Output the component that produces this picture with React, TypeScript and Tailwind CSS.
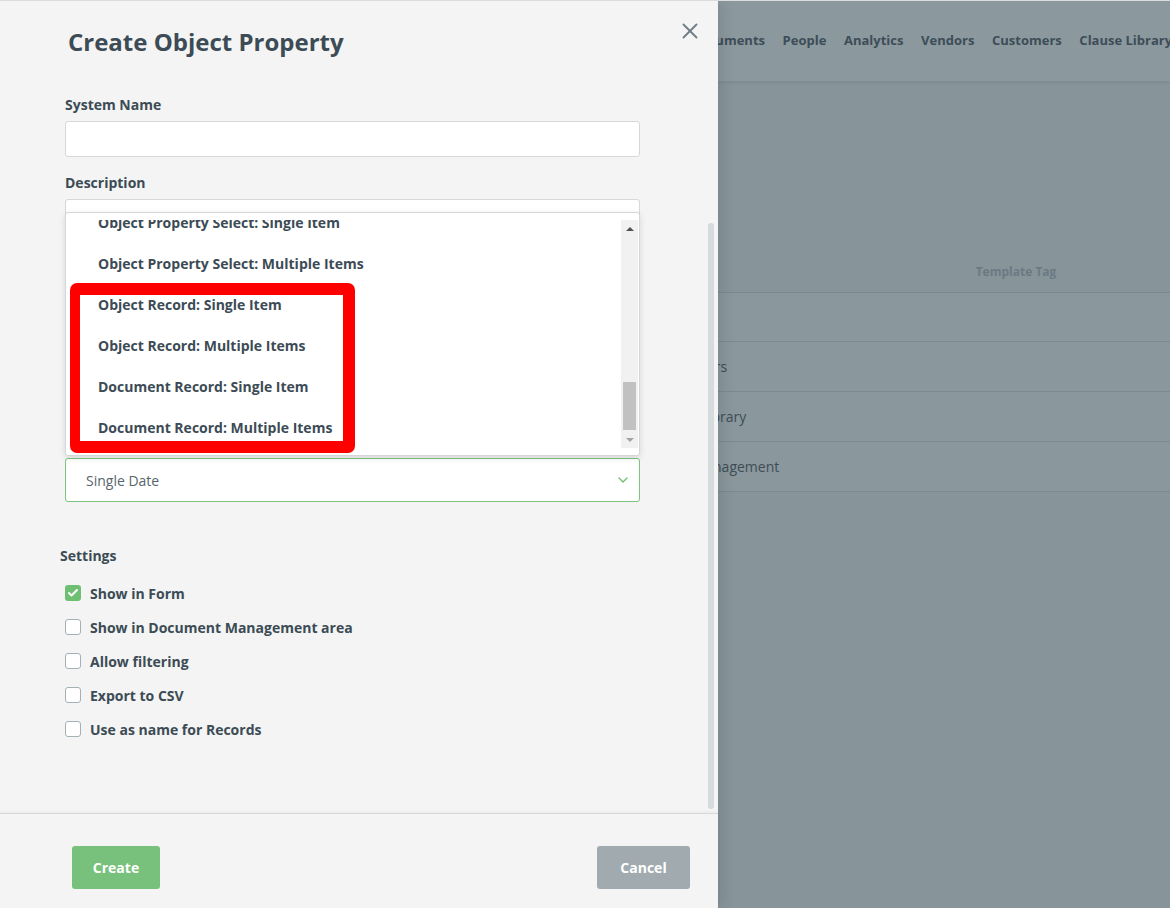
import React from "react";
import { X, ChevronDown, Check } from "lucide-react";

const navItems = ["Documents", "People", "Analytics", "Vendors", "Customers", "Clause Library"];

const tableRows = ["Legal", "Vendors", "Clause Library", "Document Management"];

const typeOptions = [
    "Object Property Select: Single Item",
    "Object Property Select: Multiple Items",
    "Object Record: Single Item",
    "Object Record: Multiple Items",
    "Document Record: Single Item",
    "Document Record: Multiple Items",
];

const settings = [
    { label: "Show in Form", checked: true },
    { label: "Show in Document Management area", checked: false },
    { label: "Allow filtering", checked: false },
    { label: "Export to CSV", checked: false },
    { label: "Use as name for Records", checked: false },
];

// Dimmed app behind the side panel
function Background() {
    return (
        <div className="w-full h-full bg-[#87949a] overflow-hidden">
            {/* Top nav */}
            <div className="h-[80px] bg-[#8b989e] flex items-center pl-[691px] gap-[17.6px] whitespace-nowrap shadow-[0_2px_3px_rgba(0,0,0,0.06)] relative">
                {navItems.map((item) => (
                    <span key={item} className="text-[13px] font-bold text-[#3d4d57]">
                        {item}
                    </span>
                ))}
            </div>

            {/* Table header */}
            <div className="h-[170px]" />
            <div className="h-[42px] flex items-center border-b border-[#7b888e]">
                <div className="w-[900px]" />
                <div className="w-[232px] text-center text-[12px] font-bold text-[#6b7a82]">Template Tag</div>
            </div>

            {/* Rows */}
            {tableRows.map((row, i) => (
                <div
                    key={row}
                    className={`flex items-center bg-[#8a979d] border-b border-[#7d8a90] ${i === 0 ? "h-[49px]" : "h-[50px]"}`}
                >
                    <div className="ml-[500px] w-[400px] text-center text-[14px] text-[#3e4d56] whitespace-nowrap">{row}</div>
                </div>
            ))}
        </div>
    );
}

function Checkbox({ checked }: { checked: boolean }) {
    if (checked) {
        return (
            <span className="w-4 h-4 rounded-[3px] bg-[#6fbf73] flex items-center justify-center">
                <Check className="w-3 h-3 text-white" strokeWidth={4} />
            </span>
        );
    }
    return <span className="w-4 h-4 rounded-[3px] bg-white border border-[#a5afb4]" />;
}

function TypeDropdown() {
    return (
        <div className="absolute left-0 right-0 bottom-[calc(100%+2px)] h-[244px] bg-white border border-[#d3d7d9] rounded-[3px] shadow-[0_2px_6px_rgba(0,0,0,0.12)] py-[7px] flex">
            <div className="flex-1 overflow-hidden">
                <div className="-mt-[18px]">
                    {typeOptions.map((opt) => (
                        <div key={opt} className="h-[41px] flex items-center pl-[32px] text-[14px] font-bold text-[#3c4b55] whitespace-nowrap">
                            {opt}
                        </div>
                    ))}
                </div>
            </div>
            {/* scrollbar */}
            <div className="w-[17px] mr-[1px] bg-[#f1f1f1] flex flex-col items-center">
                <div className="h-[17px] flex items-center justify-center">
                    <div className="w-0 h-0 border-l-[4px] border-r-[4px] border-b-[4px] border-l-transparent border-r-transparent border-b-[#505050]" />
                </div>
                <div className="flex-1 w-full px-[2px] flex flex-col justify-end">
                    <div className="h-[48px] bg-[#c1c1c1] mb-[1px]" />
                </div>
                <div className="h-[17px] flex items-center justify-center">
                    <div className="w-0 h-0 border-l-[4px] border-r-[4px] border-t-[4px] border-l-transparent border-r-transparent border-t-[#a3a3a3]" />
                </div>
            </div>

            {/* annotation box */}
            <div className="absolute left-[4px] top-[70px] w-[285px] h-[170px] border-[12px] border-l-[10px] border-[#ff0000] rounded-[7px]" />
        </div>
    );
}

function SidePanel() {
    return (
        <div className="absolute left-0 top-0 w-[718px] h-full bg-[#f3f4f3] flex flex-col shadow-[4px_0_14px_rgba(0,0,0,0.10)]">
            <div className="flex-1 relative">
                <button className="absolute left-[677px] top-[17px] text-[#6f7e86]" aria-label="Close">
                    <X className="w-[26px] h-[26px]" strokeWidth={1.7} />
                </button>

                <div className="pl-[65px] pr-[78px] pt-[25px]">
                    <h2 className="ml-[3px] text-[24px] leading-[32px] font-bold text-[#3c4b55]">Create Object Property</h2>

                    <label className="block mt-[37px] text-[14px] leading-[20px] font-bold text-[#3c4b55]">System Name</label>
                    <div className="mt-[6px] h-[36px] bg-white border border-[#d5d8da] rounded-[3px]" />

                    <label className="block mt-[16px] text-[14px] leading-[20px] font-bold text-[#3c4b55]">Description</label>
                    <div className="mt-[6px] h-[210px] bg-white border border-[#d5d8da] rounded-[3px]" />

                    <label className="block mt-[16px] text-[14px] leading-[20px] font-bold text-[#3c4b55]">Type</label>
                    <div className="relative mt-[13px]">
                        <TypeDropdown />
                        <div className="h-[44px] bg-white border border-[#7bc47f] rounded-[3px] flex items-center justify-between pl-[20px] pr-[8px]">
                            <span className="text-[14px] text-[#56656d]">Single Date</span>
                            <ChevronDown className="w-4 h-4 text-[#6fbf73]" strokeWidth={2} />
                        </div>
                    </div>

                    <div className="-ml-[5px] mt-[44px] text-[14px] leading-[20px] font-bold text-[#3c4b55]">Settings</div>
                    <div className="mt-[17px] flex flex-col gap-[14px]">
                        {settings.map((s) => (
                            <div key={s.label} className="h-[20px] flex items-center gap-[9px]">
                                <Checkbox checked={s.checked} />
                                <span className="text-[14px] font-bold text-[#3c4b55]">{s.label}</span>
                            </div>
                        ))}
                    </div>
                </div>

                {/* panel scrollbar */}
                <div className="absolute left-[708px] top-[222px] w-[6px] h-[586px] bg-[#d5dadc] rounded-[3px]" />
            </div>

            {/* Footer */}
            <div className="h-[95px] border-t border-[#d6d9da] shadow-[0_-1px_3px_rgba(0,0,0,0.05)] flex items-start justify-between pl-[72px] pr-[28px] pt-[32px]">
                <button className="w-[88px] h-[43px] rounded-[3px] bg-[#78c17c] text-white text-[14px] font-bold">Create</button>
                <button className="w-[93px] h-[43px] rounded-[3px] bg-[#a1abaf] text-white text-[14px] font-bold">Cancel</button>
            </div>
        </div>
    );
}

export default function App() {
    return (
        <div
            className="relative w-[1170px] h-[908px] overflow-hidden border-t border-[#dadddf]"
            style={{ fontFamily: '"Open Sans", "Liberation Sans", sans-serif' }}
        >
            <Background />
            <SidePanel />
        </div>
    );
}
